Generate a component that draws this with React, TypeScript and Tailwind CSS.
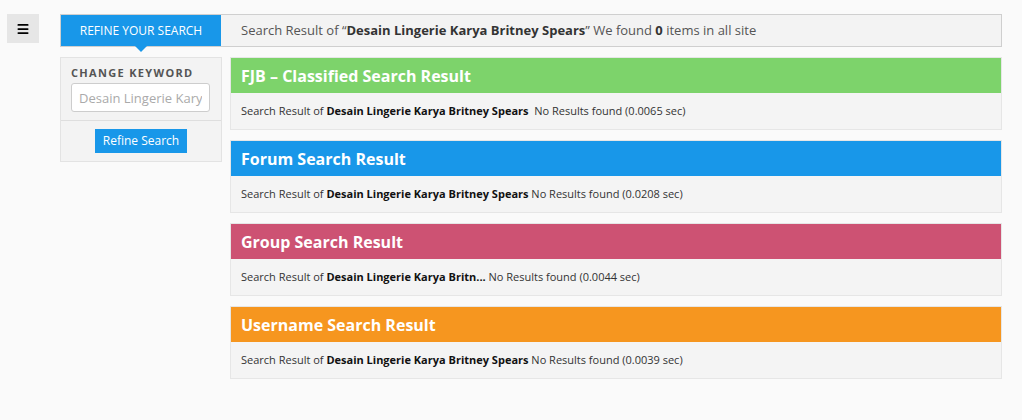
import { Menu } from 'lucide-react';

const results = [
  { title: 'FJB – Classified Search Result', color: 'bg-[#7dd36b]', keyword: 'Desain Lingerie Karya Britney Spears', time: '0.0065', extra: true },
  { title: 'Forum Search Result', color: 'bg-[#1897e9]', keyword: 'Desain Lingerie Karya Britney Spears', time: '0.0208', extra: false },
  { title: 'Group Search Result', color: 'bg-[#cd5273]', keyword: 'Desain Lingerie Karya Britn...', time: '0.0044', extra: false },
  { title: 'Username Search Result', color: 'bg-[#f6961f]', keyword: 'Desain Lingerie Karya Britney Spears', time: '0.0039', extra: false },
];

export default function App() {
  return (
    <div className="min-h-[420px] bg-[#fafafa] font-['Open_Sans',sans-serif] text-[#333] flex items-start">
      <div className="w-[60px] pl-[7px] pt-[14px] shrink-0">
        <button className="w-[32px] h-[29px] bg-[#e6e6e6] flex items-center justify-center">
          <Menu className="w-[14px] h-[14px] text-black" strokeWidth={3} />
        </button>
      </div>

      <div className="w-[942px] pt-[14px]">
        {/* top bar */}
        <div className="h-[33px] border border-[#cfcfcf] bg-[#f3f3f3] flex items-stretch">
          <div className="relative w-[160px] bg-[#1897e9] text-white text-[12px] flex items-center justify-center uppercase">
            Refine your search
            <span className="absolute left-1/2 -translate-x-1/2 top-full w-0 h-0 border-l-[6px] border-r-[6px] border-t-[6px] border-l-transparent border-r-transparent border-t-[#1897e9]" />
          </div>
          <div className="flex items-center pl-[20px] text-[13px] text-[#555]">
            <span>
              Search Result of “<b className="text-[#333]">Desain Lingerie Karya Britney Spears</b>” We found <b className="text-[#333]">0</b> items in all site
            </span>
          </div>
        </div>

        <div className="flex items-start gap-[8px] mt-[10px]">
          {/* left panel */}
          <div className="w-[162px] shrink-0 bg-[#f3f3f3] border border-[#e3e3e3]">
            <div className="px-[10px] pt-[8px] pb-[8px] border-b border-[#dedede]">
              <div className="text-[11px] font-bold tracking-[0.12em] text-[#555] uppercase leading-[14px]">Change keyword</div>
              <input
                className="mt-[3px] w-[139px] h-[29px] bg-white border border-[#cdcdcd] rounded-[3px] px-[7px] text-[13px] text-[#999] placeholder:text-[#aaa] outline-none"
                placeholder="Desain Lingerie Karya Britney Spears"
              />
            </div>
            <div className="flex justify-center pt-[8px] pb-[8px]">
              <button className="w-[92px] h-[24px] bg-[#1897e9] text-white text-[12px]">Refine Search</button>
            </div>
          </div>

          {/* results */}
          <div className="flex-1 flex flex-col gap-[10px]">
            {results.map((r, i) => (
              <div key={i} className="border border-[#e6e6e6] bg-[#f4f4f4]">
                <div className={`${r.color} h-[35px] flex items-center px-[10px] text-white text-[16px] font-bold`}>{r.title}</div>
                <div className="h-[36px] flex items-center px-[10px] text-[11px] text-[#333] whitespace-pre">
                  <span>
                    Search Result of <b className="text-[#111]">{r.keyword}</b>
                    {r.extra ? '  ' : ' '}No Results found ({r.time} sec)
                  </span>
                </div>
              </div>
            ))}
          </div>
        </div>
      </div>
    </div>
  );
}
